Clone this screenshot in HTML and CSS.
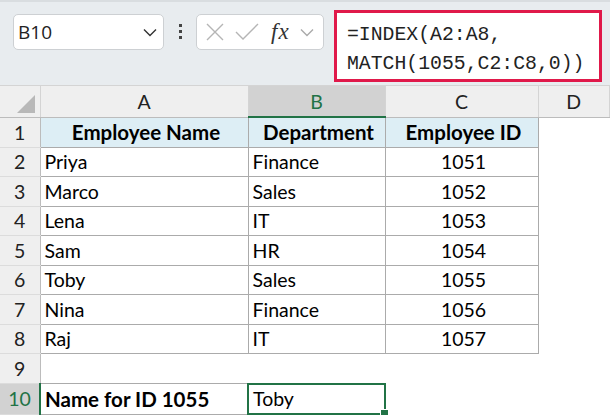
FILE: index.html
```html
<!DOCTYPE html>
<html>
  <head>
    <meta charset="utf-8">
    <title>INDEX MATCH</title>
    <link rel="stylesheet" href="styles.css">
  </head>
  <body>
    <div class="toolbar">
      <div class="namebox">
        <span>B10</span>
        <svg class="chev" width="14" height="9" viewBox="0 0 14 9"><path d="M1 1.5 L7 7.5 L13 1.5" fill="none" stroke="#333" stroke-width="1.4"/></svg>
      </div>
      <div class="dots"><i></i><i></i><i></i></div>
      <div class="fxbox">
        <svg width="20" height="20" viewBox="0 0 20 20"><path d="M2 2 L18 18 M18 2 L2 18" stroke="#b5b5b5" stroke-width="1.4"/></svg>
        <svg width="24" height="20" viewBox="0 0 24 20"><path d="M1 10 L8 17 L23 2" fill="none" stroke="#b5b5b5" stroke-width="1.4"/></svg>
        <span class="fx">fx</span>
        <svg class="chev" width="14" height="9" viewBox="0 0 14 9"><path d="M1 1.5 L7 7.5 L13 1.5" fill="none" stroke="#aaa" stroke-width="1.4"/></svg>
      </div>
      <div class="formula">=INDEX(A2:A8,<br>MATCH(1055,C2:C8,0))</div>
    </div>

    <table class="sheet">
      <colgroup>
        <col class="c-rh"><col class="c-a"><col class="c-b"><col class="c-c"><col>
      </colgroup>
      <tr class="colhead">
        <th class="corner"><span class="tri"></span></th>
        <th>A</th>
        <th class="sel">B</th>
        <th>C</th>
        <th>D</th>
      </tr>
      <tr>
        <th class="rh">1</th>
        <td class="t hd">Employee Name</td>
        <td class="t hd">Department</td>
        <td class="t hd">Employee ID</td>
        <td></td>
      </tr>
      <tr><th class="rh">2</th><td class="t">Priya</td><td class="t">Finance</td><td class="t num">1051</td><td></td></tr>
      <tr><th class="rh">3</th><td class="t">Marco</td><td class="t">Sales</td><td class="t num">1052</td><td></td></tr>
      <tr><th class="rh">4</th><td class="t">Lena</td><td class="t">IT</td><td class="t num">1053</td><td></td></tr>
      <tr><th class="rh">5</th><td class="t">Sam</td><td class="t">HR</td><td class="t num">1054</td><td></td></tr>
      <tr><th class="rh">6</th><td class="t">Toby</td><td class="t">Sales</td><td class="t num">1055</td><td></td></tr>
      <tr><th class="rh">7</th><td class="t">Nina</td><td class="t">Finance</td><td class="t num">1056</td><td></td></tr>
      <tr><th class="rh">8</th><td class="t">Raj</td><td class="t">IT</td><td class="t num">1057</td><td></td></tr>
      <tr><th class="rh">9</th><td></td><td></td><td></td><td></td></tr>
      <tr>
        <th class="rh sel">10</th>
        <td class="t bold">Name for ID 1055</td>
        <td class="active">Toby<span class="handle"></span></td>
        <td></td>
        <td></td>
      </tr>
    </table>
  </body>
</html>
```

FILE: styles.css
```css
body {
  margin: 0;
  font-family: Lato, "Open Sans", sans-serif;
  background: #fff;
  color: #000;
}

.toolbar {
  display: flex;
  align-items: flex-start;
  height: 86px;
  padding: 8px 8px 0 13px;
  box-sizing: border-box;
  background: #e8ecef;
  border-top: 2px solid #d9dde0;
  border-bottom: 1px solid #d4d4d4;
}

.namebox {
  width: 151px;
  height: 36px;
  margin-top: 4px;
  box-sizing: border-box;
  display: flex;
  align-items: center;
  justify-content: space-between;
  padding: 0 6px 0 4px;
  background: #fff;
  border: 1px solid #cdd0d3;
  border-radius: 5px;
  font-family: "Open Sans", sans-serif;
  font-size: 19px;
  color: #222;
}

.dots {
  width: 32px;
  margin-top: 14px;
  display: flex;
  flex-direction: column;
  align-items: center;
  gap: 3px;
}

.dots i {
  width: 3px;
  height: 3px;
  background: #444;
}

.fxbox {
  width: 128px;
  height: 36px;
  margin-top: 4px;
  box-sizing: border-box;
  display: flex;
  align-items: center;
  gap: 10px;
  padding: 0 4px 0 8px;
  background: #fff;
  border: 1px solid #cdd0d3;
  border-radius: 5px;
}

.fx {
  font-family: "Liberation Serif", serif;
  font-style: italic;
  font-size: 23px;
  color: #333;
  margin-left: 2px;
  letter-spacing: 1px;
}

.formula {
  margin-left: 10px;
  width: 268px;
  height: 72px;
  box-sizing: border-box;
  padding: 8px 10px 0;
  background: #fff;
  border: 3px solid #e0194a;
  font-family: "Liberation Mono", monospace;
  font-size: 19.8px;
  line-height: 29px;
  color: #222;
}

.sheet {
  border-collapse: collapse;
  table-layout: fixed;
  width: 100%;
}

.c-rh { width: 40px; }
.c-a { width: 208px; }
.c-b { width: 137px; }
.c-c { width: 153px; }

.sheet th,
.sheet td {
  padding: 0;
  height: 28.5px;
  font-size: 19.5px;
  font-weight: normal;
  white-space: nowrap;
  overflow: visible;
}

.colhead th {
  height: 30px;
  background: #efefef;
  border-right: 1px solid #d4d4d4;
  border-bottom: 1px solid #bcbcbc;
  font-weight: normal;
  color: #222;
}

.colhead th.sel {
  background: #d2d2d2;
  color: #217346;
  border-bottom: 2px solid #217346;
}

.corner {
  position: relative;
}

.tri {
  position: absolute;
  right: 5px;
  bottom: 4px;
  border-left: 18px solid transparent;
  border-bottom: 18px solid #b8b8b8;
}

.rh {
  background: #efefef;
  border-right: 1px solid #bcbcbc;
  border-bottom: 1px solid #dcdcdc;
  color: #222;
  text-align: center;
}

.rh.sel {
  background: #d2d2d2;
  color: #217346;
  border-right: 2px solid #217346;
}

.t {
  border: 1px solid #ababab;
  padding-left: 4px !important;
}

.hd {
  background: #ddeef5;
  font-weight: bold !important;
  font-size: 20.5px !important;
  text-align: center;
}

.num {
  text-align: center;
}

.bold {
  font-weight: bold !important;
  font-size: 20.5px !important;
}

.active {
  position: relative;
  border: 2px solid #217346;
  padding-left: 4px !important;
}

.handle {
  position: absolute;
  right: -5px;
  bottom: -5px;
  width: 7px;
  height: 7px;
  background: #217346;
  border: 1px solid #fff;
}
```
